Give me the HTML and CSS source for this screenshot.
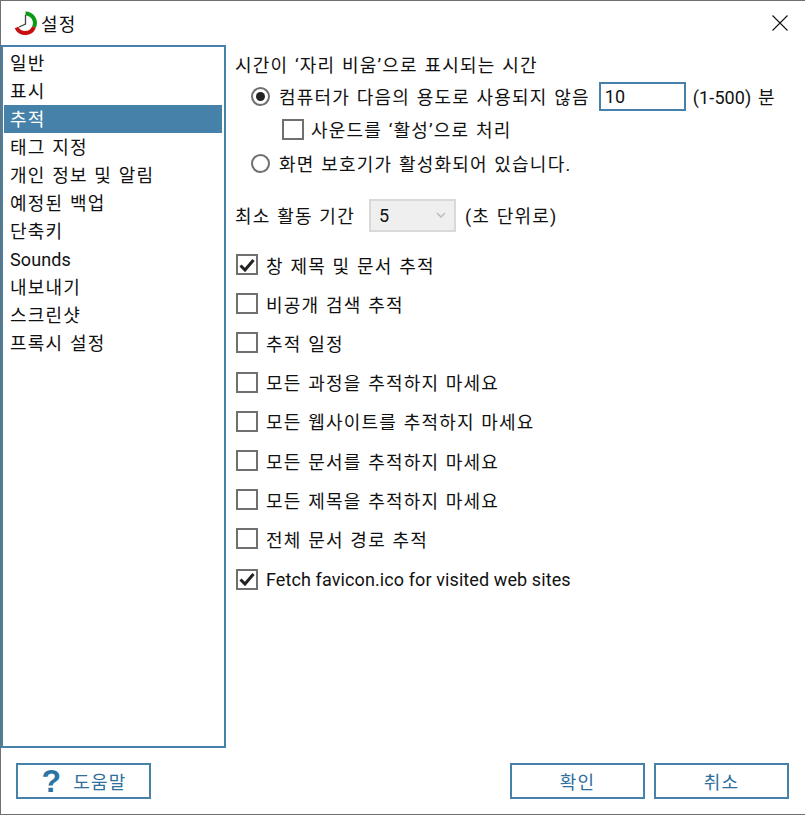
FILE: index.html
```html
<!DOCTYPE html>
<html lang="ko">
<head>
    <meta charset="UTF-8">
    <title>설정</title>
    <link rel="stylesheet" href="styles.css">
</head>
<body>
    <div class="window">
        <header class="titlebar">
            <svg class="app-icon" width="24" height="24" viewBox="0 0 24 24">
                <path d="M12.5 2.5 A9.5 9.5 0 0 1 21 16" fill="none" stroke="#0a9a14" stroke-width="4"/>
                <path d="M21 16 A9.5 9.5 0 0 1 3.5 16.5" fill="none" stroke="#c80f0f" stroke-width="4"/>
                <path d="M12.5 4 V13 L6 16" fill="none" stroke="#444" stroke-width="1.3"/>
            </svg>
            <span class="title">설정</span>
            <svg class="close" width="16" height="16" viewBox="0 0 16 16">
                <path d="M0.5 0.5 L15.5 15.5 M15.5 0.5 L0.5 15.5" stroke="#111" stroke-width="1.1"/>
            </svg>
        </header>

        <main class="main">
            <ul class="nav">
                <li>일반</li>
                <li>표시</li>
                <li class="selected">추적</li>
                <li>태그 지정</li>
                <li>개인 정보 및 알림</li>
                <li>예정된 백업</li>
                <li>단축키</li>
                <li class="latin">Sounds</li>
                <li>내보내기</li>
                <li>스크린샷</li>
                <li>프록시 설정</li>
            </ul>

            <section class="panel">
                <div class="heading">시간이 ‘자리 비움’으로 표시되는 시간</div>
                <div class="row idle-row">
                    <span class="radio on"></span>
                    <span>컴퓨터가 다음의 용도로 사용되지 않음</span>
                    <span class="textbox latin">10</span>
                    <span><span class="latin">(1-500)</span> 분</span>
                </div>
                <div class="row sound-row">
                    <span class="check"></span>
                    <span>사운드를 ‘활성’으로 처리</span>
                </div>
                <div class="row saver-row">
                    <span class="radio"></span>
                    <span>화면 보호기가 활성화되어 있습니다.</span>
                </div>
                <div class="row min-row">
                    <span>최소 활동 기간</span>
                    <span class="combo latin">5
                        <svg width="10" height="6" viewBox="0 0 10 6"><path d="M1 1 L5 5 L9 1" fill="none" stroke="#bcbcbc" stroke-width="1.5"/></svg>
                    </span>
                    <span>(초 단위로)</span>
                </div>
                <div class="checks">
                    <div class="row"><span class="check on"><svg width="16" height="14" viewBox="0 0 16 14"><path d="M1.5 7.5 L6 12 L14.5 2" fill="none" stroke="#222" stroke-width="3"/></svg></span><span>창 제목 및 문서 추적</span></div>
                    <div class="row"><span class="check"></span><span>비공개 검색 추적</span></div>
                    <div class="row"><span class="check"></span><span>추적 일정</span></div>
                    <div class="row"><span class="check"></span><span>모든 과정을 추적하지 마세요</span></div>
                    <div class="row"><span class="check"></span><span>모든 웹사이트를 추적하지 마세요</span></div>
                    <div class="row"><span class="check"></span><span>모든 문서를 추적하지 마세요</span></div>
                    <div class="row"><span class="check"></span><span>모든 제목을 추적하지 마세요</span></div>
                    <div class="row"><span class="check"></span><span>전체 문서 경로 추적</span></div>
                    <div class="row last"><span class="check on"><svg width="16" height="14" viewBox="0 0 16 14"><path d="M1.5 7.5 L6 12 L14.5 2" fill="none" stroke="#222" stroke-width="3"/></svg></span><span class="latin">Fetch favicon.ico for visited web sites</span></div>
                </div>
            </section>
        </main>

        <footer class="footer">
            <button class="btn help"><span class="mark">?</span>도움말</button>
            <div class="right-btns">
                <button class="btn">확인</button>
                <button class="btn">취소</button>
            </div>
        </footer>
    </div>
</body>
</html>
```

FILE: styles.css
```css
* {
    margin: 0;
    padding: 0;
    box-sizing: border-box;
}

body {
    font-family: Roboto, "Noto Sans CJK KR", sans-serif;
    font-size: 18px;
    letter-spacing: 1.2px;
    word-spacing: 1px;
    color: #111;
    background-color: #fff;
}

.latin {
    letter-spacing: 0.1px;
    word-spacing: 0;
}

.window {
    width: 805px;
    height: 815px;
    border: 1px solid #707070;
    border-right: none;
    display: flex;
    flex-direction: column;
    overflow: hidden;
}

.titlebar {
    height: 44px;
    display: flex;
    align-items: center;
    padding: 0 17px 0 12px;
    flex-shrink: 0;
}

.title {
    margin-left: 4px;
}

.close {
    margin-left: auto;
}

.main {
    display: flex;
    height: 703px;
    flex-shrink: 0;
}

.nav {
    width: 225px;
    border: 2px solid #4681a9;
    list-style: none;
    padding: 2px 2px 2px 1px;
    flex-shrink: 0;
}

.nav li {
    height: 28px;
    line-height: 30px;
    padding-left: 6px;
}

.nav .selected {
    background-color: #4681a9;
    color: #fff;
}

.panel {
    padding: 6px 0 0 9px;
    flex-grow: 1;
}

.heading {
    height: 27px;
    line-height: 30px;
}

.row {
    display: flex;
    align-items: center;
}

.idle-row {
    height: 36px;
    padding-left: 16px;
}

.sound-row {
    height: 30px;
    padding-left: 47px;
}

.saver-row {
    height: 38px;
    padding-left: 16px;
}

.min-row {
    height: 36px;
    margin-top: 15px;
}

.radio {
    width: 19px;
    height: 19px;
    border: 2px solid #6f6f6f;
    border-radius: 50%;
    margin-right: 9px;
    display: flex;
    align-items: center;
    justify-content: center;
    flex-shrink: 0;
}

.radio.on::after {
    content: "";
    width: 9px;
    height: 9px;
    border-radius: 50%;
    background-color: #222;
}

.check {
    width: 22px;
    height: 21px;
    border: 2px solid #707070;
    margin-right: 7px;
    display: flex;
    align-items: center;
    justify-content: center;
    flex-shrink: 0;
}

.textbox {
    width: 87px;
    height: 29px;
    border: 2px solid #4681a9;
    margin: 0 7px 0 9px;
    padding-left: 4px;
    line-height: 25px;
}

.combo {
    width: 87px;
    height: 33px;
    border: 2px solid #d9d9d9;
    background-color: #efefef;
    margin: 0 9px 0 14px;
    padding: 0 8px;
    display: flex;
    align-items: center;
    justify-content: space-between;
}

.checks {
    margin-top: 12px;
    padding-left: 1px;
}

.checks .row {
    height: 39.2px;
}

.checks .check {
    margin-right: 8px;
}

.checks .last {
    margin-top: 1px;
}

.footer {
    display: flex;
    justify-content: space-between;
    padding: 15px 16px 0 15px;
}

.right-btns {
    display: flex;
    gap: 9px;
}

.btn {
    width: 135px;
    height: 36px;
    border: 2px solid #4681a9;
    background-color: #fff;
    color: #2f6f9c;
    font-family: inherit;
    font-size: 18px;
    letter-spacing: 1.2px;
    display: flex;
    align-items: center;
    justify-content: center;
}

.mark {
    font-family: "Liberation Sans", sans-serif;
    font-weight: bold;
    font-size: 32px;
    color: #2a74a6;
    margin-right: 11px;
    margin-left: 1px;
}
```
